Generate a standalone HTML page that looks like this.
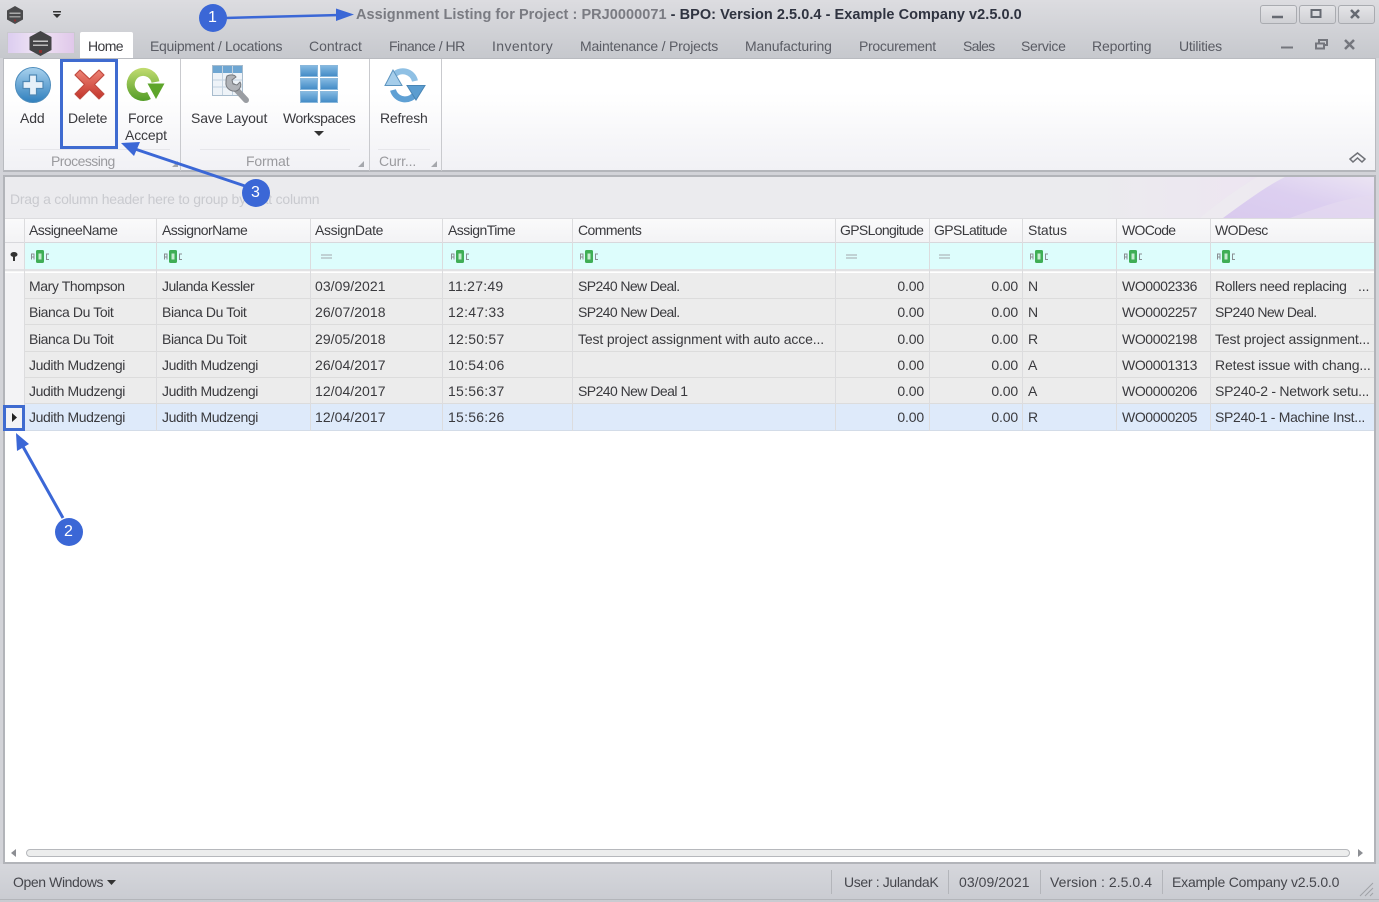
<!DOCTYPE html>
<html><head><meta charset="utf-8"><title>Assignment Listing</title>
<style>
html,body{margin:0;padding:0;width:1379px;height:902px;overflow:hidden;background:#d2d3d8}
body{position:relative;font-family:"Liberation Sans",sans-serif;font-size:14px;color:#3a3a3e}
#p{position:absolute;left:0;top:0;width:1379px;height:902px;overflow:hidden;filter:blur(.35px)}
.a,.t,.r{position:absolute}
.t,.r{white-space:nowrap;line-height:18px;letter-spacing:-.15px}
.r{text-align:right}
.m{color:#5a5c64}
.row{position:absolute;left:5px;width:1369px;height:26px;background:#ececec;border-bottom:1px solid #dcdcdc;box-sizing:border-box}
.v{position:absolute;width:1px;background:#dcdcde}
.g{color:#9a9a9e}
.h1{letter-spacing:-.55px}
.n{letter-spacing:-.4px}
.d{letter-spacing:.05px}
.c{letter-spacing:.25px}
.s{letter-spacing:-.6px}
.w{letter-spacing:-.4px}
svg{position:absolute;overflow:visible}
</style></head><body><div id="p">
<div class="a" style="left:0;top:0;width:1379px;height:58px;background:linear-gradient(#dcdce0,#c6c8cd)"></div>

<svg style="left:5px;top:5px" width="20" height="20" viewBox="0 0 20 20"><path d="M10 1l8 4.500v9L10 19l-8-4.500v-9z" fill="#4a4a4c"/><rect x="4.500" y="7.500" width="11" height="1.500" fill="#aaa"/><rect x="4.500" y="11" width="11" height="1.500" fill="#999"/><rect x="9" y="14.500" width="2" height="2" fill="#8a3030"/></svg>
<svg style="left:52px;top:11px" width="10" height="8" viewBox="0 0 10 8"><rect x="1" y="0" width="8" height="1.500" fill="#333"/><path d="M1 3h8L5 7z" fill="#333"/></svg>

<div class="t" style="left:356px;top:6px;font-weight:bold;font-size:14.500px;letter-spacing:.045px;color:#7a7b82">Assignment Listing for Project : PRJ0000071 <span style="color:#2f3340">- BPO: Version 2.5.0.4 - Example Company v2.5.0.0</span></div>

<div class="a" style="left:1260px;top:5px;width:35px;height:17px;border:1px solid #a9abb0;border-radius:3px;background:linear-gradient(#e4e4e7,#cfd0d4)"></div>
<div class="a" style="left:1299px;top:5px;width:35px;height:17px;border:1px solid #a9abb0;border-radius:3px;background:linear-gradient(#e4e4e7,#cfd0d4)"></div>
<div class="a" style="left:1338px;top:5px;width:35px;height:17px;border:1px solid #a9abb0;border-radius:3px;background:linear-gradient(#e4e4e7,#cfd0d4)"></div>
<svg style="left:1260px;top:5px" width="115" height="18" viewBox="0 0 115 18" fill="none" stroke="#666a72"><path d="M12 12h11" stroke-width="2.500"/><rect x="51.500" y="5" width="9" height="7" stroke-width="2"/><path d="M91 5l8 8M99 5l-8 8" stroke-width="2.500"/></svg>

<div class="a" style="left:7px;top:32px;width:68px;height:22px;background:linear-gradient(90deg,#dccdf0,#f0e4f4 45%,#e0c8ea);border:1px solid #c9c9ce;box-sizing:border-box"></div>
<svg style="left:28px;top:30px" width="25" height="27" viewBox="0 0 25 27"><path d="M12.500 1l11 6v13l-11 6-11-6V7z" fill="#444446"/><rect x="5" y="10.500" width="15" height="1.500" fill="#c8c8c8"/><rect x="5" y="14.500" width="15" height="1.500" fill="#bbb"/><rect x="11" y="20" width="3" height="3" fill="#8a3030"/></svg>

<div class="a" style="left:80px;top:32px;width:53px;height:27px;background:#fff;border-radius:2px 2px 0 0"></div>
<div class="t" style="left:88px;top:37px;letter-spacing:-.6px">Home</div>
<div class="t m" style="left:150px;top:37px;letter-spacing:-.3px">Equipment / Locations</div>
<div class="t m" style="left:309px;top:37px;letter-spacing:0">Contract</div>
<div class="t m" style="left:389px;top:37px;letter-spacing:-.5px">Finance / HR</div>
<div class="t m" style="left:492px;top:37px;letter-spacing:.4px">Inventory</div>
<div class="t m" style="left:580px;top:37px;letter-spacing:-.2px">Maintenance / Projects</div>
<div class="t m" style="left:745px;top:37px">Manufacturing</div>
<div class="t m" style="left:859px;top:37px;letter-spacing:-.3px">Procurement</div>
<div class="t m" style="left:963px;top:37px;letter-spacing:-.7px">Sales</div>
<div class="t m" style="left:1021px;top:37px;letter-spacing:-.3px">Service</div>
<div class="t m" style="left:1092px;top:37px">Reporting</div>
<div class="t m" style="left:1179px;top:37px;letter-spacing:-.25px">Utilities</div>
<svg style="left:1280px;top:38px" width="85" height="14" viewBox="0 0 85 14" fill="none" stroke="#74767d" stroke-width="2"><path d="M1 9.500h12"/><path d="M36 5.500h8v5h-8zM39 5V2h8v5h-3"/><path d="M65 2l9 9M74 2l-9 9" stroke-width="2.500"/></svg>

<!-- ribbon -->
<div class="a" style="left:3px;top:58px;width:1373px;height:114px;background:linear-gradient(#fff 30%,#f1f1f5);border:1px solid #b9bbc0;border-bottom:2px solid #b4b6bb;box-sizing:border-box"></div>
<div class="a" style="left:180px;top:59px;width:1px;height:112px;background:#c9cace"></div>
<div class="a" style="left:369px;top:59px;width:1px;height:112px;background:#c9cace"></div>
<div class="a" style="left:441px;top:59px;width:1px;height:112px;background:#c9cace"></div>

<svg style="left:15px;top:67px" width="36" height="36" viewBox="0 0 36 36"><defs><linearGradient id="b1" x1="0" y1="0" x2="0" y2="1"><stop offset="0" stop-color="#a9d2ee"/><stop offset="1" stop-color="#2f7fbd"/></linearGradient></defs><circle cx="18" cy="18" r="17.500" fill="url(#b1)" stroke="#4d8cbc"/><path d="M14.500 8h7v6.500H28v7h-6.500V28h-7v-6.500H8v-7h6.500z" fill="#e6f0f9" stroke="#4f88b5" stroke-width="1.200"/></svg>
<svg style="left:73px;top:68px" width="33" height="33" viewBox="0 0 33 33"><defs><linearGradient id="r1" x1="0" y1="0" x2="0" y2="1"><stop offset="0" stop-color="#ee8476"/><stop offset="1" stop-color="#c2342a"/></linearGradient></defs><path d="M2 7l5-5 9.500 9 9.500-9 5 5-9.500 9.500 9.500 9.500-5 5-9.500-9.500L7 31l-5-5 9.500-9.500z" fill="url(#r1)" stroke="#c04a40" stroke-width="1.200" stroke-linejoin="round"/></svg>
<svg style="left:127px;top:68px" width="39" height="34" viewBox="0 0 39 34" fill="none"><defs><linearGradient id="g1" gradientUnits="userSpaceOnUse" x1="0" y1="0" x2="0" y2="34"><stop offset="0" stop-color="#c2dc70"/><stop offset="1" stop-color="#4f9a24"/></linearGradient></defs><path d="M22 27.500A12.500 12.500 0 1 1 28.500 14" stroke="url(#g1)" stroke-width="8"/><path d="M20.500 15.500h17L29 31z" fill="#5ea52b"/></svg>

<svg style="left:212px;top:65px" width="37" height="38" viewBox="0 0 37 38" fill="none"><rect x=".5" y=".5" width="30" height="30" fill="#eef3f8" stroke="#a8bccd"/><rect x="1" y="1" width="29" height="7" fill="#6ea6d2"/><path d="M10.500 1v29M20.500 1v29M1 15h29M1 22h29" stroke="#c3d2df"/><path d="M21 21l13 14" stroke="#9a9da2" stroke-width="6" stroke-linecap="round"/><path d="M15 11c4-2 8-1 9 1l-4 3 1 4 4 1 3-3c2 3 0 8-4 9-5 1-11-3-10-9 0-2 0-4 1-6z" fill="#b0b3b8" stroke="#76797e"/></svg>
<svg style="left:300px;top:65px" width="38" height="38" viewBox="0 0 38 38" stroke="#8ab8dc"><defs><linearGradient id="w1" x1="0" y1="0" x2="0" y2="1"><stop offset="0" stop-color="#86bae2"/><stop offset="1" stop-color="#418ac6"/></linearGradient></defs><g fill="url(#w1)"><rect x=".5" y=".5" width="17" height="11"/><rect x="20.500" y=".5" width="17" height="11"/><rect x=".5" y="13.500" width="17" height="11"/><rect x="20.500" y="13.500" width="17" height="11"/><rect x=".5" y="26.500" width="17" height="11"/><rect x="20.500" y="26.500" width="17" height="11"/></g></svg>
<svg style="left:384px;top:68px" width="41" height="34" viewBox="0 0 41 34" fill="none"><path d="M31 13A12.500 12.500 0 0 0 9 8" stroke="#8fc0e4" stroke-width="6"/><path d="M1 17.500L9 2l9 15.500z" fill="#a5cdea" stroke="#5c94bf"/><path d="M9 22A12.500 12.500 0 0 0 32 25" stroke="#5fa0d4" stroke-width="6"/><path d="M23 17.500h18L32 32z" fill="#5b9dd0" stroke="#4a86b5"/></svg>

<div class="t" style="left:20px;top:109px">Add</div>
<div class="t" style="left:68px;top:109px;letter-spacing:-.2px">Delete</div>
<div class="t" style="left:128px;top:109px">Force</div>
<div class="t" style="left:125px;top:126px">Accept</div>
<div class="t" style="left:191px;top:109px">Save Layout</div>
<div class="t" style="left:283px;top:109px;letter-spacing:-.45px">Workspaces</div>
<svg style="left:314px;top:131px" width="10" height="6"><path d="M0 0h10L5 5z" fill="#333"/></svg>
<div class="t" style="left:380px;top:109px;letter-spacing:-.2px">Refresh</div>
<div class="t g" style="left:51px;top:152px;letter-spacing:-.55px">Processing</div>
<div class="t g" style="left:246px;top:152px">Format</div>
<div class="t g" style="left:379px;top:152px">Curr...</div>
<div class="a" style="left:20px;top:149px;width:150px;height:1px;background:#e6e6ea"></div>
<div class="a" style="left:200px;top:149px;width:150px;height:1px;background:#e6e6ea"></div>
<div class="a" style="left:378px;top:149px;width:52px;height:1px;background:#e6e6ea"></div>
<svg style="left:172px;top:160px" width="265" height="8" fill="#a5a7ac"><path d="M0 7h6V1zM186 7h6V1zM259 7h6V1z"/></svg>
<svg style="left:1349px;top:152px" width="17" height="13" viewBox="0 0 17 13" fill="none" stroke="#6f7177" stroke-width="1.500"><path d="M1 7l7.500-6 7.500 6-3 3-4.500-4-4.500 4z"/></svg>

<!-- grid -->
<div class="a" style="left:3px;top:175px;width:1373px;height:689px;background:#fff;border:2px solid #b2b4b9;box-sizing:border-box"></div>
<div class="a" style="left:5px;top:177px;width:1369px;height:41px;background:#ebebee"></div>
<svg style="left:1100px;top:177px" width="274" height="41" viewBox="0 0 274 41"><defs><linearGradient id="p1" x1="0" y1="0" x2="1" y2="0"><stop offset="0" stop-color="#ebebee"/><stop offset=".5" stop-color="#ede6f1"/><stop offset="1" stop-color="#e8dff1"/></linearGradient><linearGradient id="p2" x1="0" y1="1" x2="1" y2="0"><stop offset="0" stop-color="#d9caee"/><stop offset=".5" stop-color="#dccff0"/><stop offset="1" stop-color="#ebe4f3"/></linearGradient></defs><rect width="274" height="41" fill="url(#p1)"/><path d="M123 41C145 25 165 10 185 0l-28 0C140 10 115 28 100 41z" fill="#ededf0" opacity=".5"/><path d="M123 41C145 25 165 10 185 0H274V41z" fill="url(#p2)"/><path d="M190 41C215 32 240 22 274 18V41z" fill="#e4daf0" opacity=".7"/></svg>
<div class="t" style="left:10px;top:190px;color:#c9cacf;letter-spacing:-.23px">Drag a column header here to group by that column</div>

<div class="a" style="left:5px;top:218px;width:1369px;height:25px;background:linear-gradient(#fafafb,#f3f3f5);border-top:1px solid #dcdcdf;border-bottom:1px solid #d8d8dc;box-sizing:border-box"></div>
<div class="a" style="left:24px;top:243px;width:1350px;height:26px;background:#ddfdfc"></div>
<div class="a" style="left:5px;top:243px;width:19px;height:26px;background:#f3f3f5"></div>
<div class="a" style="left:5px;top:269px;width:1369px;height:3px;background:#e2e2e4;border-bottom:1px solid #f6f6f6;box-sizing:border-box"></div>
<svg style="left:10px;top:252px" width="8" height="10" viewBox="0 0 8 10"><ellipse cx="4" cy="2.500" rx="3.500" ry="2.500" fill="#333"/><rect x="3" y="4" width="2" height="5" fill="#333"/></svg>

<div class="row" style="top:273px"></div>
<div class="row" style="top:299px"></div>
<div class="row" style="top:325px;height:27px"></div>
<div class="row" style="top:352px"></div>
<div class="row" style="top:378px"></div>
<div class="row" style="top:404px;height:27px;background:#deeafa;border-bottom-color:#d3dce8"></div>
<div class="a" style="left:5px;top:273px;width:19px;height:158px;background:#f3f3f5"></div>
<svg style="left:12px;top:413px" width="5" height="9"><path d="M0 0l5 4.500L0 9z" fill="#222"/></svg>

<div class="v" style="left:24px;top:218px;height:213px"></div>
<div class="v" style="left:156px;top:218px;height:213px"></div>
<div class="v" style="left:310px;top:218px;height:213px"></div>
<div class="v" style="left:442px;top:218px;height:213px"></div>
<div class="v" style="left:572px;top:218px;height:213px"></div>
<div class="v" style="left:835px;top:218px;height:213px"></div>
<div class="v" style="left:929px;top:218px;height:213px"></div>
<div class="v" style="left:1022px;top:218px;height:213px"></div>
<div class="v" style="left:1116px;top:218px;height:213px"></div>
<div class="v" style="left:1210px;top:218px;height:213px"></div>

<div class="t h1" style="left:29px;top:221px">AssigneeName</div>
<div class="t h1" style="left:162px;top:221px">AssignorName</div>
<div class="t" style="left:315px;top:221px;letter-spacing:-.35px">AssignDate</div>
<div class="t h1" style="left:448px;top:221px">AssignTime</div>
<div class="t h1" style="left:578px;top:221px">Comments</div>
<div class="t" style="left:840px;top:221px;letter-spacing:-.65px">GPSLongitude</div>
<div class="t" style="left:934px;top:221px;letter-spacing:-.6px">GPSLatitude</div>
<div class="t" style="left:1028px;top:221px">Status</div>
<div class="t" style="left:1122px;top:221px;letter-spacing:-.7px">WOCode</div>
<div class="t h1" style="left:1215px;top:221px">WODesc</div>

<svg width="0" height="0"><defs><g id="abc"><rect x="6" y="0" width="8" height="13" rx="1.500" fill="#3fae55"/><rect x="8.500" y="3.500" width="3" height="6" fill="#c5ebd0"/><path d="M1.500 9.500V4h2.500v5.500M1.500 7h2.500M19 4h-2.500v5.500H19" fill="none" stroke="#8a8d92"/></g><g id="eq"><path d="M0 1h11M0 4h11" stroke="#a4a6ab" fill="none"/></g></defs></svg>
<svg style="left:30px;top:250px" width="20" height="13"><use href="#abc"/></svg>
<svg style="left:163px;top:250px" width="20" height="13"><use href="#abc"/></svg>
<svg style="left:321px;top:254px" width="12" height="6"><use href="#eq"/></svg>
<svg style="left:450px;top:250px" width="20" height="13"><use href="#abc"/></svg>
<svg style="left:579px;top:250px" width="20" height="13"><use href="#abc"/></svg>
<svg style="left:846px;top:254px" width="12" height="6"><use href="#eq"/></svg>
<svg style="left:939px;top:254px" width="12" height="6"><use href="#eq"/></svg>
<svg style="left:1029px;top:250px" width="20" height="13"><use href="#abc"/></svg>
<svg style="left:1123px;top:250px" width="20" height="13"><use href="#abc"/></svg>
<svg style="left:1216px;top:250px" width="20" height="13"><use href="#abc"/></svg>

<!-- row 1 -->
<div class="t n" style="left:29px;top:277px">Mary Thompson</div><div class="t" style="left:162px;top:277px;letter-spacing:-.5px">Julanda Kessler</div><div class="t d" style="left:315px;top:277px">03/09/2021</div><div class="t c" style="left:448px;top:277px">11:27:49</div><div class="t s" style="left:578px;top:277px">SP240 New Deal.</div><div class="r" style="right:455px;top:277px">0.00</div><div class="r" style="right:361px;top:277px">0.00</div><div class="t" style="left:1028px;top:277px">N</div><div class="t w" style="left:1122px;top:277px">WO0002336</div><div class="t" style="left:1215px;top:277px;letter-spacing:-.35px">Rollers need replacing</div><div class="t" style="left:1358px;top:277px">...</div>
<!-- row 2 -->
<div class="t n" style="left:29px;top:303px">Bianca Du Toit</div><div class="t n" style="left:162px;top:303px">Bianca Du Toit</div><div class="t d" style="left:315px;top:303px">26/07/2018</div><div class="t c" style="left:448px;top:303px">12:47:33</div><div class="t s" style="left:578px;top:303px">SP240 New Deal.</div><div class="r" style="right:455px;top:303px">0.00</div><div class="r" style="right:361px;top:303px">0.00</div><div class="t" style="left:1028px;top:303px">N</div><div class="t w" style="left:1122px;top:303px">WO0002257</div><div class="t s" style="left:1215px;top:303px">SP240 New Deal.</div>
<!-- row 3 -->
<div class="t n" style="left:29px;top:330px">Bianca Du Toit</div><div class="t n" style="left:162px;top:330px">Bianca Du Toit</div><div class="t d" style="left:315px;top:330px">29/05/2018</div><div class="t c" style="left:448px;top:330px">12:50:57</div><div class="t" style="left:578px;top:330px">Test project assignment with auto acce...</div><div class="r" style="right:455px;top:330px">0.00</div><div class="r" style="right:361px;top:330px">0.00</div><div class="t" style="left:1028px;top:330px">R</div><div class="t w" style="left:1122px;top:330px">WO0002198</div><div class="t" style="left:1215px;top:330px">Test project assignment...</div>
<!-- row 4 -->
<div class="t n" style="left:29px;top:356px">Judith Mudzengi</div><div class="t n" style="left:162px;top:356px">Judith Mudzengi</div><div class="t d" style="left:315px;top:356px">26/04/2017</div><div class="t c" style="left:448px;top:356px">10:54:06</div><div class="r" style="right:455px;top:356px">0.00</div><div class="r" style="right:361px;top:356px">0.00</div><div class="t" style="left:1028px;top:356px">A</div><div class="t w" style="left:1122px;top:356px">WO0001313</div><div class="t" style="left:1215px;top:356px">Retest issue with chang...</div>
<!-- row 5 -->
<div class="t n" style="left:29px;top:382px">Judith Mudzengi</div><div class="t n" style="left:162px;top:382px">Judith Mudzengi</div><div class="t d" style="left:315px;top:382px">12/04/2017</div><div class="t c" style="left:448px;top:382px">15:56:37</div><div class="t" style="left:578px;top:382px;letter-spacing:-.55px">SP240 New Deal 1</div><div class="r" style="right:455px;top:382px">0.00</div><div class="r" style="right:361px;top:382px">0.00</div><div class="t" style="left:1028px;top:382px">A</div><div class="t w" style="left:1122px;top:382px">WO0000206</div><div class="t" style="left:1215px;top:382px;letter-spacing:-.25px">SP240-2 - Network setu...</div>
<!-- row 6 -->
<div class="t n" style="left:29px;top:408px">Judith Mudzengi</div><div class="t n" style="left:162px;top:408px">Judith Mudzengi</div><div class="t d" style="left:315px;top:408px">12/04/2017</div><div class="t c" style="left:448px;top:408px">15:56:26</div><div class="r" style="right:455px;top:408px">0.00</div><div class="r" style="right:361px;top:408px">0.00</div><div class="t" style="left:1028px;top:408px">R</div><div class="t w" style="left:1122px;top:408px">WO0000205</div><div class="t" style="left:1215px;top:408px;letter-spacing:-.32px">SP240-1 - Machine Inst...</div>

<!-- scrollbar -->
<svg style="left:10px;top:848px" width="1359" height="10" fill="#8c8e93"><path d="M6 1v8L1 5zM1348 1v8l5-4z"/></svg>
<div class="a" style="left:26px;top:849px;width:1324px;height:8px;border:1px solid #b6b8bc;border-radius:5px;background:#eceded;box-sizing:border-box"></div>

<!-- status -->
<div class="a" style="left:0;top:864px;width:1379px;height:38px;background:linear-gradient(#d6d7dc,#c9cbd1)"></div>
<div class="a" style="left:0;top:899px;width:1379px;height:1px;background:#b3b5ba"></div>
<div class="t" style="left:13px;top:873px;color:#45464c;letter-spacing:-.4px">Open Windows</div>
<svg style="left:107px;top:880px" width="9" height="5"><path d="M0 0h9L4.500 5z" fill="#333"/></svg>
<div class="a" style="left:831px;top:870px;width:1px;height:24px;background:#b3b5ba"></div>
<div class="a" style="left:948px;top:870px;width:1px;height:24px;background:#b3b5ba"></div>
<div class="a" style="left:1040px;top:870px;width:1px;height:24px;background:#b3b5ba"></div>
<div class="a" style="left:1162px;top:870px;width:1px;height:24px;background:#b3b5ba"></div>
<div class="t" style="left:844px;top:873px;color:#45464c;letter-spacing:-.35px">User : JulandaK</div>
<div class="t d" style="left:959px;top:873px;color:#45464c">03/09/2021</div>
<div class="t" style="left:1050px;top:873px;color:#45464c;letter-spacing:.05px">Version : 2.5.0.4</div>
<div class="t" style="left:1172px;top:873px;color:#45464c;letter-spacing:-.2px">Example Company v2.5.0.0</div>
<svg style="left:1359px;top:882px" width="15" height="15" stroke="#a0a2a7" fill="none"><path d="M1 14L14 1M6 14l8-8M11 14l3-3"/></svg>

<!-- annotations -->
<div class="a" style="left:60px;top:59px;width:58px;height:90px;border:3px solid #3f6bd0;box-sizing:border-box"></div>
<div class="a" style="left:3px;top:405px;width:22px;height:26px;border:3px solid #3f6bd0;box-sizing:border-box"></div>
<svg style="left:0;top:0" width="1379" height="902" fill="#3b67d6" stroke="#3b67d6">
<path d="M225 18L340 15" stroke-width="2.500" fill="none"/><path d="M336 8.500L354 14.500 336 21z" stroke="none"/>
<path d="M245 186L132 148" stroke-width="3" fill="none"/><path d="M121 143L140 142 134 156z" stroke="none"/>
<path d="M63 518L21 443" stroke-width="3" fill="none"/><path d="M16 433L29 444 17 451z" stroke="none"/>
<circle cx="213" cy="18" r="14" stroke="none"/><circle cx="256" cy="193" r="14" stroke="none"/><circle cx="69" cy="532" r="14" stroke="none"/>
</svg>
<div class="t" style="left:208px;top:9px;color:#fff;font-size:16px;letter-spacing:0">1</div>
<div class="t" style="left:251px;top:184px;color:#fff;font-size:16px;letter-spacing:0">3</div>
<div class="t" style="left:64px;top:523px;color:#fff;font-size:16px;letter-spacing:0">2</div>
</div></body></html>
